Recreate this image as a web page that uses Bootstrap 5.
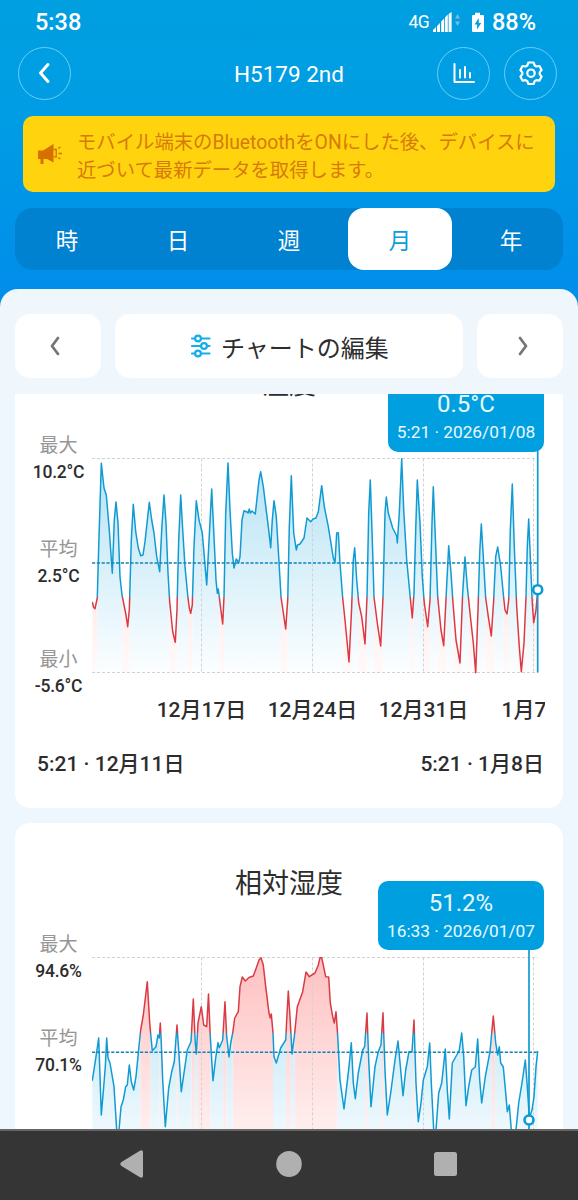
<!DOCTYPE html>
<html lang="ja">
<head>
<meta charset="utf-8">
<meta name="viewport" content="width=device-width, initial-scale=1">
<title>H5179 2nd</title>
<link href="https://cdn.jsdelivr.net/npm/bootstrap@5.3.0/dist/css/bootstrap.min.css" rel="stylesheet">
<style>
body{font-family:Roboto,"Noto Sans CJK JP",sans-serif;color:#2d2d2d;background:#eff7fe;height:1200px;line-height:1.2}
svg{display:block;flex:none}
.phone{width:578px;height:1200px}
.top-area{height:310px;background:linear-gradient(#009fe0 0,#009de4 35%,#008eea 92%)}
.status{height:45px;padding:0 42px 0 35px;font-size:23.5px;font-weight:500}
.status .net{font-size:17.5px;font-weight:400;letter-spacing:-.6px}
.title-bar{height:58px;padding:0 21px 0 18px}
.round-btn{width:53px;height:53px;border:1px solid #66d0f8;border-radius:50%;background:none;padding:0;top:-1px}
.device{font-size:22.5px;left:0;right:0;padding-top:1px}
.notice{margin:13px 23px 0;height:76px;border-radius:10px;background:#ffd40f;color:#d77b08;font-size:19.35px;line-height:28px;padding:0 0 0 15px}
.notice .msg{margin-left:14px;padding-top:5px}
.periods{margin:16px 15px 0;height:62px;border-radius:18px;background:#0082d0;font-size:22.5px;color:#fff;padding:0}
.periods .nav-link{width:104px;height:62px;padding:4px 0 0;border-radius:16px;color:#fff;display:flex;align-items:center;justify-content:center}
.periods .nav-link.active{background:#fff;color:#0a9fd8}
.sheet{height:105px;margin-top:-21px;background:#eff7fd;border-radius:18px 18px 0 0;padding:25px 15px 0}
.tool{height:64px;background:#fff;border:0;border-radius:15px;color:#2d2d2d;font-size:24px;padding:0}
.tool span{margin-left:10px;padding-top:7px}
.tool.side{width:86px}
.scroller{height:735px;overflow:hidden}
.metric{height:484px;border:0;border-radius:15px;background:#fff;margin:0 15px 15px;padding-top:41px}
.metric.first{margin-top:-70px}
.metric h2{font-size:27px;font-weight:400;line-height:40px;margin:0;height:40px;text-align:center}
.plot{margin-top:25px;height:250px}
.scale{width:77px;padding-left:10px;text-align:center}
.scale .pair{height:56px}
.scale .nm{font-size:19px;line-height:28px;color:#969696;padding-top:1.5px;height:28px}
.scale .vl{font-size:17.5px;line-height:28px;font-weight:500;letter-spacing:-.2px}
.chart{width:453px;height:230px;margin-top:20px}
.tip{right:19px;background:#00a0e0;color:#e9f8ff;border-radius:10px;height:69px;text-align:center;padding-top:6px}
.tip .big{font-size:24px;line-height:30px}
.tip .when{font-size:17.3px;line-height:26px}
.days{margin-left:77px;width:453px;padding-left:54px;height:30px;overflow:hidden;font-size:21px;font-weight:500;line-height:30px}
.days span{flex:0 0 111px;text-align:center;white-space:nowrap}
.range{padding:0 19px 0 22px;font-size:21px;font-weight:500;margin-top:24px;line-height:30px}
.sysbar{height:71px;background:#353535;border-top:2px solid #666}
</style>
</head>
<body>
<div class="phone d-flex flex-column overflow-hidden">
  <header class="top-area text-white flex-shrink-0">
    <div class="status d-flex align-items-center">
      <span>5:38</span>
      <span class="net ms-auto">4G</span>
      <svg style="margin-left:4px" width="28" height="22" viewBox="0 0 28 22" fill="#fff"><path d="M0 20v-2l3-3v5zM4 20v-6l3-3v9zM8.200 20V9.500l3-3V20zM12 20V5.500l2.800-3V20zM15.600 20V2l3-2v20z"/><path fill="#7fb9d5" d="M22 6.500l2.500-4.500L27 6.500zM22 9.500h5l-2.500 4.500z"/></svg>
      <svg style="margin-left:10px" width="14" height="21" viewBox="0 0 14 21"><path fill="#fff" d="M1 3h3V.800h5V3h3q1 0 1 1v15q0 1-1 1H2q-1 0-1-1V4q0-1 1-1z"/><path fill="#009fe0" d="M7.800 6L3.500 12.500h2.600v5L10.200 11H7.800z"/></svg>
      <span style="margin-left:7px">88%</span>
    </div>
    <div class="title-bar d-flex align-items-center position-relative">
      <div class="device position-absolute text-center">H5179 2nd</div>
      <button class="round-btn d-flex align-items-center justify-content-center position-relative" aria-label="戻る"><svg width="14" height="22" viewBox="0 0 14 22" fill="none" stroke="#fff" stroke-width="3" stroke-linecap="round" stroke-linejoin="round"><path d="M10 2.500L2.500 11l7.500 8.500"/></svg></button>
      <button class="round-btn d-flex align-items-center justify-content-center ms-auto position-relative" aria-label="統計"><svg width="24" height="24" viewBox="0 0 24 24" fill="none" stroke="#fff" stroke-width="2" stroke-linecap="round" stroke-linejoin="round"><path d="M2.500 3v18H22M8 9v7.500M13 6v10.500M18 12v4.500"/></svg></button>
      <button class="round-btn d-flex align-items-center justify-content-center position-relative" style="margin-left:14px" aria-label="設定"><svg width="26" height="26" viewBox="0 0 26 26" fill="none" stroke="#fff" stroke-width="2.200" stroke-linejoin="round"><path d="M10.400 2.500h5.200l1.100 3 1.700 1 3.100-.5 2.100 4-1.900 2.400v1.800l1.900 2.400-2.100 4-3.100-.5-1.700 1-1.100 2.900h-5.200l-1.100-2.900-1.700-1-3.100.5-2.100-4 1.900-2.400v-1.800L2.400 10l2.100-4 3.100.5 1.700-1z"/><circle cx="13" cy="13.200" r="3.700"/></svg></button>
    </div>
    <div class="notice d-flex align-items-center">
      <svg width="25" height="22" viewBox="0 0 25 22" fill="#d77000"><path d="M0 7.500h5L15.500 1v18.500L9 16H5.500v5H2.500V16H0z"/><path fill="none" stroke="#d77000" stroke-width="1.300" d="M15.500 6.500h2.700v7.300h-2.700M20 5.500l2.500-1.500M20.500 10.500H24M20 14.500l2.500 1.500"/></svg>
      <div class="msg text-nowrap">モバイル端末のBluetoothをONにした後、デバイスに<br>近づいて最新データを取得します。</div>
    </div>
    <nav class="periods nav nav-pills justify-content-between flex-nowrap">
      <a class="nav-link">時</a><a class="nav-link">日</a><a class="nav-link">週</a><a class="nav-link active">月</a><a class="nav-link">年</a>
    </nav>
  </header>

  <section class="sheet d-flex flex-shrink-0 align-items-start" style="gap:14px">
    <button class="tool side d-flex align-items-center justify-content-center" aria-label="前"><svg style="margin-left:-6px" width="12" height="22" viewBox="0 0 12 22" fill="none" stroke="#767676" stroke-width="2.800" stroke-linecap="round" stroke-linejoin="round"><path d="M9 3l-6 8 6 8"/></svg></button>
    <button class="tool flex-fill d-flex align-items-center justify-content-center"><svg style="margin-left:2px" width="20" height="24" viewBox="0 0 20 24" fill="none" stroke="#13aeea" stroke-width="2.200" stroke-linecap="round"><path d="M1 4.500h3M10 4.500h8.500M1 12h9M16 12h2.500M1 19.500h3M10 19.500h8.500"/><circle cx="7" cy="4.500" r="2.900"/><circle cx="13" cy="12" r="2.900"/><circle cx="7" cy="19.500" r="2.900"/></svg><span>チャートの編集</span></button>
    <button class="tool side d-flex align-items-center justify-content-center" aria-label="次"><svg style="margin-left:6px" width="12" height="22" viewBox="0 0 12 22" fill="none" stroke="#767676" stroke-width="2.800" stroke-linecap="round" stroke-linejoin="round"><path d="M3 3l6 8-6 8"/></svg></button>
  </section>

  <main class="scroller flex-shrink-0">
    <article class="metric first position-relative">
      <h2>温度</h2>
      <div class="plot d-flex">
        <div class="scale">
          <div class="pair"><div class="nm">最大</div><div class="vl">10.2°C</div></div>
          <div class="pair" style="margin-top:48px"><div class="nm">平均</div><div class="vl">2.5°C</div></div>
          <div class="pair" style="margin-top:54px"><div class="nm">最小</div><div class="vl">-5.6°C</div></div>
        </div>
        <svg class="chart" id="temp" viewBox="92 450 453 230"></svg>
      </div>
      <div class="tip position-absolute" style="width:156px;top:59px"><div class="big">0.5°C</div><div class="when">5:21 · 2026/01/08</div></div>
      <div class="days d-flex" style="margin-top:15px"><span>12月17日</span><span>12月24日</span><span>12月31日</span><span>1月7日</span></div>
      <div class="range d-flex justify-content-between"><span>5:21 · 12月11日</span><span>5:21 · 1月8日</span></div>
    </article>
    <article class="metric position-relative">
      <h2>相対湿度</h2>
      <div class="plot d-flex">
        <div class="scale">
          <div class="pair"><div class="nm">最大</div><div class="vl">94.6%</div></div>
          <div class="pair" style="margin-top:38px"><div class="nm">平均</div><div class="vl">70.1%</div></div>
        </div>
        <svg class="chart" id="hum" viewBox="92 949 453 230"></svg>
      </div>
      <div class="tip position-absolute" style="width:166px;top:58px;padding-top:7px"><div class="big">51.2%</div><div class="when">16:33 · 2026/01/07</div></div>
    </article>
  </main>

  <footer class="sysbar flex-shrink-0 d-flex align-items-center">
    <svg width="578" height="69" viewBox="0 1131 578 69" fill="#b0b0b0"><path d="M121.500 1162l18-11q3.500-2 3.500 1.500v23q0 3.500-3.500 1.500l-18-11q-2.500-2 0-4z"/><ellipse cx="289" cy="1164" rx="12.800" ry="13"/><rect x="434" y="1152" width="23" height="24" rx="2.500"/></svg>
  </footer>
</div>

<script>
const temp = `92.3,602 93.5,607 95,608.7 97.3,598 98.7,547 101.3,463.3 104,488 106.3,495 109.3,530 112.3,573.3 114.3,520 116,502 118,523 120,577 122,595 124,605 126,615 127.7,626.7 129.3,610 131.3,540 133.3,504.3 135.7,531.7 138.3,548 140.7,555.7 143,555 145,541.7 149.3,502.3 151.7,520 154,533 156.7,556.7 159.7,571.7 161.7,530 164,495 166,523 168,573 169.7,601.7 172.7,631.7 175.3,642.3 177,610 178.7,540 180.7,495 182.7,530 185,566.7 187.7,595 189.3,608 190.7,613.3 192.3,605 194,546.7 196.3,500.7 199,520 202.3,533 204.3,556.7 206.7,585 208.7,546.7 211.7,489 214,536.7 216,580 217.3,593.3 218.3,589 220,603 222.7,624 224,597 225.7,513 228,463 230,510 232.3,553 234,568 236.3,559 238.7,562.7 240,556.7 242,520 244,510.7 247,512 248,513 249.3,509 250.3,513 252,511 255.3,514 259,480 260.7,471.7 263.3,486.7 268.3,526.7 270.7,547.7 272.3,520 274,500.7 276.3,516.7 278.7,556.7 281,596.7 285.7,629 287.7,600 289.3,526.7 291.3,475.7 293.7,533 296.3,550 297.5,545 300,544 304,538 307,518 310.7,521.7 313,519 316,518 318.3,511.7 321.7,485.7 324.3,506.7 328.3,526.7 333.3,558 335,562.7 336.7,533 338.3,532.7 340,563 342.7,598 345,620 349,662 351.7,606.7 353.3,560 354.7,547.7 356.7,580 358.7,603 361.7,616.7 365,644 367,596.7 368.7,513 370.3,480 372.3,540 374,596.7 377.3,623 380.7,646 383,596.7 385,513 386.3,497 388.3,513 392.7,528 396.7,536 397.3,543 399.3,513 401.7,458.8 403.7,510 406.7,560 410.3,598 412.3,618 414,593 415.7,530 417.3,480 420,523 422.3,576.7 424.3,603 427.7,626.7 430,600 432,523 433.3,486.7 435.3,536.7 437.7,597 441,630 443.7,645.7 446.3,593 448.7,545.7 451,573 453,603 456,640 460,663 462.7,593 465,557 467.3,586.7 470,613 473.3,643 475.7,672.7 478,610 479.7,553 481.3,524 483.3,556.7 485.7,598 488.3,616.7 491.3,636 493.7,600 495.7,556.7 497.7,547 500.7,566.7 503.7,598 505,610 507,614 508.7,600 510.3,530 512.3,484 514.3,546.7 516.7,606.7 519.3,646.7 521.3,671.7 524,643 526,596.7 527.3,546.7 528.7,519 530.3,556.7 532.3,603 533.7,622.7 536,610 537.7,590`;
const hum = `92.3,1080.7 96,1056.7 98.7,1038 101.3,1115 103.7,1086.7 105.3,1066.7 106.7,1038 108,1058 110,1063 114,1086.7 116.7,1130 119,1130 121,1107 123.3,1100 125.7,1086.7 127.3,1085 129.3,1065 131.3,1081.7 133.7,1090 136,1076.7 139.3,1043 140.7,1030 143.3,1015 147.3,981.7 149.7,1023 152.3,1050.7 156,1046.7 158,1035 159.3,1038 160.3,1023 161.3,1043 162.7,1080 165.3,1126.7 168.7,1088 171.7,1071.7 174.3,1061.7 177,1025 178.7,1050 181.3,1091.7 184,1073 187.3,1050 191,1041.7 193.3,999 195.3,1043 196.3,1054 198,1023 201.3,1006.7 203.7,1025 206.7,1026.7 208.5,994 210.3,1036.7 213,1080.7 215.7,1058 218,1042.7 219.3,1047.7 222.7,1040 225,1001.7 226.7,1036.7 229,1057 230.7,1043 232.7,1033 234.7,1018 238.3,1011.7 240,986.7 242.3,977 245.3,981 249,977.500 253.3,976 256.7,966.7 259,960 261,957.7 263.3,965 265.7,986.7 269,1013 270.3,1018 271.3,1014 273,1033 274,1056.7 276.3,1063 280.7,1048 285.7,1040 286.7,1020 288.3,991 290,1016.7 292,1054 294.3,1036.7 297.3,1006.7 302.7,991.7 306,972 309.3,976.7 315,973 318.3,965 320,957.7 321.7,957.7 325.7,976.7 328.7,977 330.3,1003 332.7,1016.7 334.3,1023 336,1011.7 337.3,1030 340,1080 344,1109 346.7,1086.7 349,1066.7 351.3,1042.7 353.3,1083 355.3,1098.7 358.3,1073 362.7,1050 364.7,1046.7 367,1013 368.7,1060 371,1106.7 375,1066.7 378.3,1051.7 381,1045 383,1012.7 385,1070 387.3,1115 390.7,1093 395,1060 398,1041 400.7,1070 403,1095.7 405.7,1070 409,1051.7 412,1051.7 414,1020 416,1083 418.3,1121.7 421,1103 423.3,1080 427.3,1066.7 429.7,1043 431.3,1083 433.7,1130 436,1130 438.7,1093 441.7,1083 445.3,1049 447.3,1090 449.3,1119 452.3,1063 457.3,1054 459.3,1050 461.7,1033 463.7,1056.7 466,1105.7 468.7,1086.7 471.7,1070 475.3,1067 477.7,1039 479.7,1080 481.7,1103 485.3,1076.7 490,1051.7 493.3,1016 495.7,1043 497.7,1055 499.3,1046.7 500.7,1063 503.3,1067 505.7,1093 507.3,1111.7 509.3,1105 511.3,1130 516,1130 518.7,1103 522,1083 525.3,1060 527.3,1086.7 529.3,1118 532,1110 534,1096.7 536,1066.7 537.7,1051`;

// Splits the series wherever it crosses the limit, so each run has one colour.
function runs(text, limit) {
  const pts = text.split(' ').map(p => p.split(',').map(Number));
  const out = [];
  let cur = [pts[0]];
  for (let i = 1; i < pts.length; i++) {
    const [a, b] = [pts[i - 1], pts[i]];
    if ((a[1] < limit) !== (b[1] < limit)) {
      const x = a[0] + (b[0] - a[0]) * (limit - a[1]) / (b[1] - a[1]);
      cur.push([x, limit]);
      out.push({above: a[1] < limit, pts: cur});
      cur = [[x, limit]];
    }
    cur.push(b);
  }
  out.push({above: pts[pts.length - 1][1] < limit, pts: cur});
  return out;
}
function draw(id, o) {
  const grad = (n, a, b) => `<linearGradient id="${id}${n}" gradientUnits="userSpaceOnUse" x1="0" x2="0" y1="${o.top}" y2="${o.bottom}"><stop stop-color="${a}"/><stop offset="1" stop-color="${b}"/></linearGradient>`;
  let s = `<defs>${grad('b', '#b4e2f4', '#fcfeff')}${grad('r', o.redTop, '#fffafa')}</defs>`, lines = '';
  for (const r of runs(o.data, o.limit)) {
    const red = r.above === o.redAbove, d = r.pts.map(p => p[0].toFixed(1) + ' ' + p[1].toFixed(1)).join('L');
    s += `<path fill="url(#${id}${red ? 'r' : 'b'})" d="M${r.pts[0][0]} ${o.bottom}L${d}L${r.pts[r.pts.length - 1][0]} ${o.bottom}Z"/>`;
    lines += `<path fill="none" stroke="${red ? '#d93b45' : '#119bd3'}" stroke-width="1.5" stroke-linejoin="round" d="M${d}"/>`;
  }
  s += `<path fill="none" stroke="#d2d2d2" stroke-width="1" stroke-dasharray="3 2" d="M92 ${o.top}H538M92 ${o.bottom}H538M201.500 ${o.top}V${o.bottom}M312.500 ${o.top}V${o.bottom}M423.500 ${o.top}V${o.bottom}M533.500 ${o.top}V${o.bottom}"/>`;
  s += lines + `<path stroke="#1682b5" stroke-width="1.500" stroke-dasharray="3.200 1.600" d="M92 ${o.avg}H538"/>`;
  s += `<path stroke="#119bd3" stroke-width="1.700" d="M${o.mx} ${o.top - 8}V${o.bottom}"/><circle cx="${o.mx}" cy="${o.my}" r="4.500" fill="#fff" stroke="#079bd8" stroke-width="2.600"/>`;
  document.getElementById(id).innerHTML = s;
}
draw('temp', {data: temp, limit: 597, redAbove: false, top: 458.5, bottom: 672.5, avg: 563, redTop: '#ffd0d0', mx: 537.7, my: 589.7});
draw('hum', {data: hum, limit: 1033, redAbove: true, top: 957.5, bottom: 1171.5, avg: 1052.3, redTop: '#ffc0c0', mx: 529, my: 1120});
</script>
</body>
</html>
